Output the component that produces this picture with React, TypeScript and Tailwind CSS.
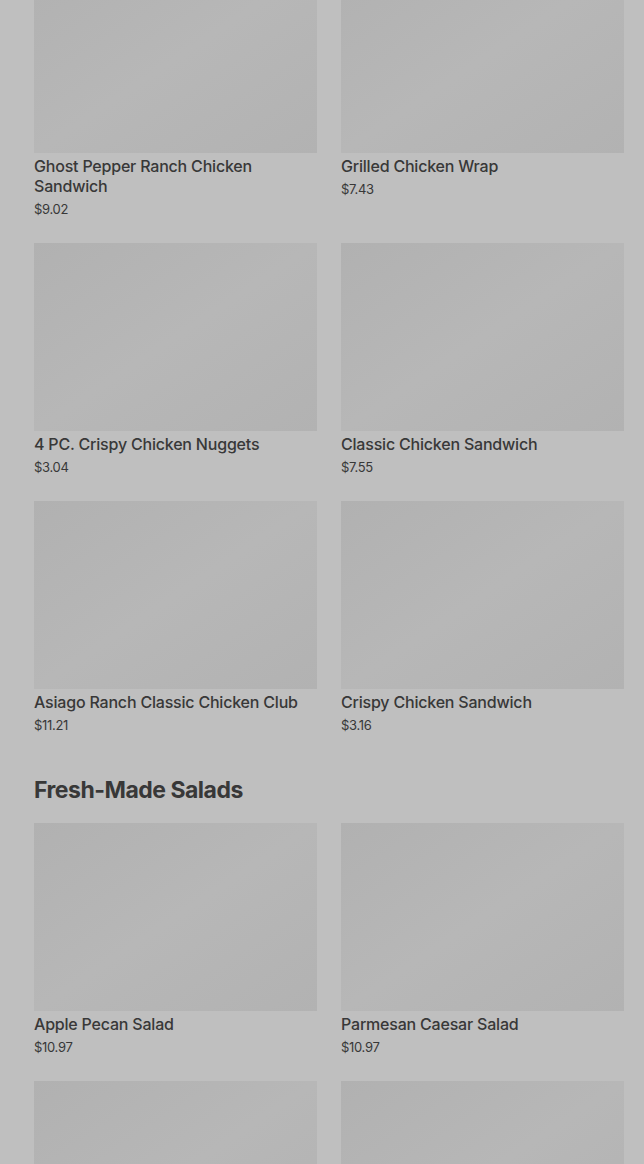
const sections = [
  {
    title: null as string | null,
    items: [
      { name: 'Ghost Pepper Ranch Chicken Sandwich', price: '$9.02' },
      { name: 'Grilled Chicken Wrap', price: '$7.43' },
      { name: '4 PC. Crispy Chicken Nuggets', price: '$3.04' },
      { name: 'Classic Chicken Sandwich', price: '$7.55' },
      { name: 'Asiago Ranch Classic Chicken Club', price: '$11.21' },
      { name: 'Crispy Chicken Sandwich', price: '$3.16' },
    ],
  },
  {
    title: 'Fresh-Made Salads',
    items: [
      { name: 'Apple Pecan Salad', price: '$10.97' },
      { name: 'Parmesan Caesar Salad', price: '$10.97' },
      { name: '', price: '' },
      { name: '', price: '' },
    ],
  },
];

function Card({ name, price }: { name: string; price: string }) {
  return (
    <div className="flex flex-col">
      <div className="h-[188px] w-full bg-gradient-to-br from-[#b1b1b1] via-[#b7b7b7] to-[#b2b2b2]" />
      {name && (
        <div className="mt-[3px] text-[16px] leading-[20px] font-medium tracking-[-0.2px] text-[#383838]">
          {name}
        </div>
      )}
      {price && (
        <div className="mt-[3px] text-[13px] leading-[20px] tracking-[-0.3px] text-[#383838]">{price}</div>
      )}
    </div>
  );
}

export default function App() {
  return (
    <div
      className="h-[1164px] overflow-hidden bg-[#bfbfbf]"
      style={{ fontFamily: 'Inter, "Noto Sans", sans-serif' }}
    >
      <div className="-mt-[35px] pl-[34px] pr-[20px]">
        {sections.map((s, i) => (
          <div key={i}>
            {s.title && (
              <h2 className="mt-[15px] mb-[17px] text-[23px] leading-[32px] font-bold tracking-[-0.5px] text-[#383838]">
                {s.title}
              </h2>
            )}
            <div className="grid grid-cols-2 gap-x-[24px] gap-y-[24px] pb-[24px]">
              {s.items.map((it, j) => (
                <Card key={j} name={it.name} price={it.price} />
              ))}
            </div>
          </div>
        ))}
      </div>
    </div>
  );
}
